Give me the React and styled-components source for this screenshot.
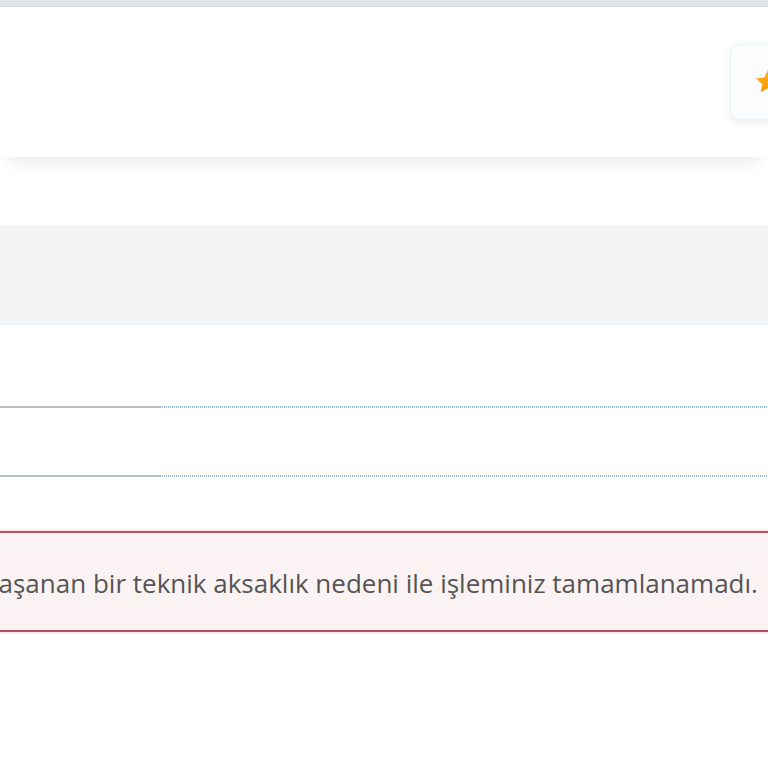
import styled, { createGlobalStyle } from "styled-components";

const GlobalStyle = createGlobalStyle`
  html, body {
    margin: 0;
    padding: 0;
    background: #ffffff;
    overflow: hidden;
  }
  body {
    font-family: "Open Sans", "Noto Sans", sans-serif;
  }
`;

const Page = styled.div`
  display: flex;
  flex-direction: column;
  width: 768px;
  height: 768px;
  overflow: hidden;
`;

const TopStrip = styled.div`
  height: 6px;
  background: #e3e4e6;
  border-bottom: 1px solid #d9dadc;
`;

const Header = styled.header`
  position: relative;
  z-index: 1;
  display: flex;
  align-items: center;
  justify-content: flex-end;
  height: 150px;
  background: #ffffff;
  box-shadow: 0 14px 14px -8px rgba(0, 0, 0, 0.08);
`;

const FavButton = styled.button`
  display: flex;
  align-items: center;
  justify-content: center;
  flex-shrink: 0;
  width: 76px;
  height: 76px;
  margin-right: -38px;
  padding: 0;
  background: #fbfcfd;
  border: 1px solid #eef1f4;
  border-radius: 8px;
  box-shadow: 0 3px 10px rgba(0, 0, 0, 0.07);
  cursor: pointer;
`;

const Spacer = styled.div`
  height: ${(p) => p.h}px;
`;

const Band = styled.div`
  height: 100px;
  background: #f3f4f6;
`;

const FieldList = styled.div`
  display: flex;
  flex-direction: column;
  gap: 67px;
  padding-top: 81px;
`;

const Field = styled.div`
  height: 2px;
  background: repeating-linear-gradient(90deg, #9bb6d2 0 1px, transparent 1px 2px);
`;

const FieldFill = styled.div`
  width: 160px;
  height: 2px;
  background: #b3c1cb;
`;

const Alert = styled.div`
  display: flex;
  align-items: center;
  height: 95px;
  margin-top: 54px;
  margin-left: -40px;
  margin-right: -40px;
  padding-left: 24px;
  padding-top: 2px;
  background: #fbf3f3;
  border-top: 2px solid #b3515f;
  border-bottom: 2px solid #b3515f;
  box-shadow: 0 -2px 0 #fde9ee, 0 2px 0 #fde9ee;
  color: #555555;
  font-size: 26px;
  white-space: nowrap;
`;

function StarIcon() {
  return (
    <svg width="30" height="30" viewBox="0 0 24 24">
      <defs>
        <linearGradient id="starFill" x1="0" y1="0" x2="0" y2="1">
          <stop offset="0" stopColor="#ffb21a" />
          <stop offset="1" stopColor="#f59a0c" />
        </linearGradient>
      </defs>
      <path
        d="M12 2.2l2.9 6.1 6.6.8-4.9 4.6 1.3 6.6L12 17l-5.9 3.3 1.3-6.6-4.9-4.6 6.6-.8z"
        fill="url(#starFill)"
      />
    </svg>
  );
}

export default function App() {
  return (
    <>
      <GlobalStyle />
      <Page>
        <TopStrip />
        <Header>
          <FavButton aria-label="Favori">
            <StarIcon />
          </FavButton>
        </Header>
        <Spacer h={68} />
        <Band />
        <FieldList>
          <Field>
            <FieldFill />
          </Field>
          <Field>
            <FieldFill />
          </Field>
        </FieldList>
        <Alert>Yaşanan bir teknik aksaklık nedeni ile işleminiz tamamlanamadı.</Alert>
      </Page>
    </>
  );
}
